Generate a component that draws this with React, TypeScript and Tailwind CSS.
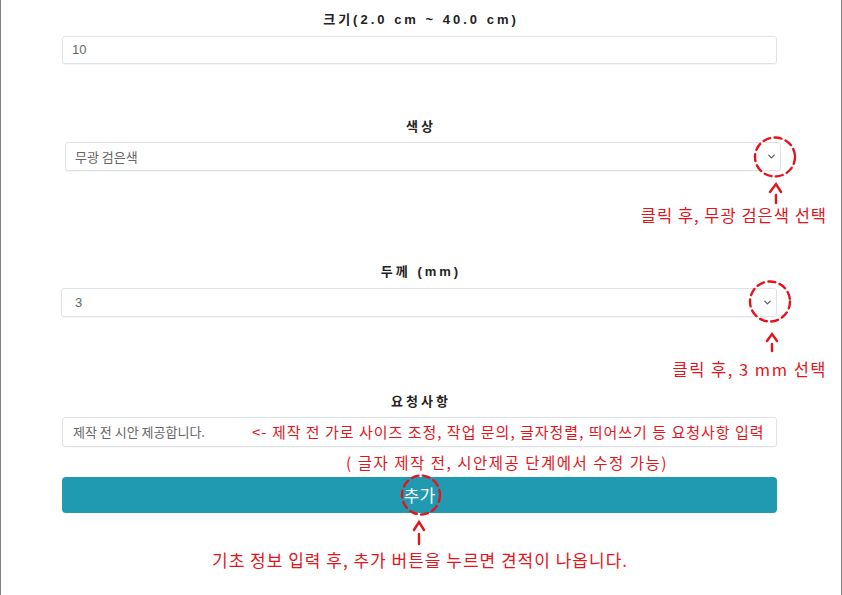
import { ChevronDown } from "lucide-react";

const label = "h-4 flex items-center justify-center text-[13px] font-bold tracking-[3px] text-[#222] leading-4";
const box = "h-full w-full flex items-center rounded-[3px] border border-[#dfe3e7] bg-white text-[13px] text-[#666] shadow-[0_1px_1px_rgba(0,0,0,0.04)]";
const note = "text-[#e3141c] leading-6 whitespace-nowrap font-['Noto_Sans_CJK_KR',sans-serif]";

const Marks = () => (
    <svg className="absolute inset-0 pointer-events-none" width="842" height="595" viewBox="0 0 842 595" fill="none" stroke="#e3141c" strokeWidth="2.4" strokeLinecap="round">
        {/* color select */}
        <ellipse cx="774" cy="157" rx="20" ry="19.5" strokeDasharray="7 4.5" />
        <polyline points="769,192 775,184 780,192" />
        <line x1="775" y1="195" x2="775" y2="203" />

        {/* thickness select */}
        <ellipse cx="769" cy="301.5" rx="20" ry="20" strokeDasharray="7 4.5" />
        <polyline points="766,341 771,334 776,341" />
        <line x1="771" y1="344" x2="771" y2="351" />

        {/* add button */}
        <ellipse cx="420" cy="495" rx="19" ry="19.5" strokeDasharray="7 4.5" />
        <polyline points="413,530 418,522 423,530" />
        <line x1="418" y1="534" x2="418" y2="544" />
    </svg>
);

const App = () => {
    return (
        <div className="relative w-[842px] h-[595px] overflow-hidden bg-white border-x border-[#808080] font-['Liberation_Sans','Noto_Sans_CJK_KR',sans-serif]">
            <div className="flex flex-col pt-[12px]">

                {/* size */}
                <div className={label}>크기(2.0 cm ~ 40.0 cm)</div>
                <div className="mt-2 ml-[61px] mr-[64px] h-[28px]">
                    <div className={box + " pl-[9px]"}>10</div>
                </div>

                {/* color */}
                <div className={label + " mt-[55px]"}>색상</div>
                <div className="mt-[7px] ml-[64px] mr-[60px] h-[29px]">
                    <div className={box + " pl-[9px] pr-[2px] justify-between"}>
                        <span className="font-['Noto_Sans_CJK_KR',sans-serif]">무광 검은색</span>
                        <ChevronDown size={11} strokeWidth={2.6} className="text-[#555] mr-[1px]" />
                    </div>
                </div>
                <div className="mt-[32px] flex justify-end pr-[14px]">
                    <span className={note + " text-[16.5px] tracking-[1px]"}>클릭 후, 무광 검은색 선택</span>
                </div>

                {/* thickness */}
                <div className={label + " mt-[37px]"}>두께 (mm)</div>
                <div className="mt-2 ml-[60px] mr-[64px] h-[29px]">
                    <div className={box + " pl-[13px] pr-[3px] justify-between"}>
                        <span>3</span>
                        <ChevronDown size={11} strokeWidth={2.6} className="text-[#555]" />
                    </div>
                </div>
                <div className="mt-[40px] flex justify-end pr-[14px]">
                    <span className={note + " text-[16.5px] tracking-[1.5px]"}>클릭 후, 3 mm 선택</span>
                </div>

                {/* request */}
                <div className={label + " mt-[13px]"}>요청사항</div>
                <div className="relative mt-[7px] ml-[61px] mr-[64px] h-[30px]">
                    <div className={box + " pl-[10px] font-['Noto_Sans_CJK_KR',sans-serif]"}>제작 전 시안 제공합니다.</div>
                    <span className={note + " absolute left-[190px] top-[3px] text-[15px] tracking-[1px]"}>
                        &lt;- 제작 전 가로 사이즈 조정, 작업 문의, 글자정렬, 띄어쓰기 등 요청사항 입력
                    </span>
                </div>
                <div className="mt-[5px] h-5 flex items-center pl-[345px]">
                    <span className={note + " text-[15.5px] tracking-[1.5px]"}>( 글자 제작 전, 시안제공 단계에서 수정 가능)</span>
                </div>

                {/* add button */}
                <div className="mt-[5px] ml-[61px] mr-[64px] h-[36px]">
                    <button className="h-full w-full rounded-[4px] bg-[#1f9ab0] text-white text-[17px] font-['Noto_Sans_CJK_KR',sans-serif]">추가</button>
                </div>
                <div className="mt-[35px] pl-[211px]">
                    <span className={note + " text-[17px] tracking-[1px]"}>기초 정보 입력 후, 추가 버튼을 누르면 견적이 나옵니다.</span>
                </div>
            </div>

            <Marks />
        </div>
    );
};

export default App;
